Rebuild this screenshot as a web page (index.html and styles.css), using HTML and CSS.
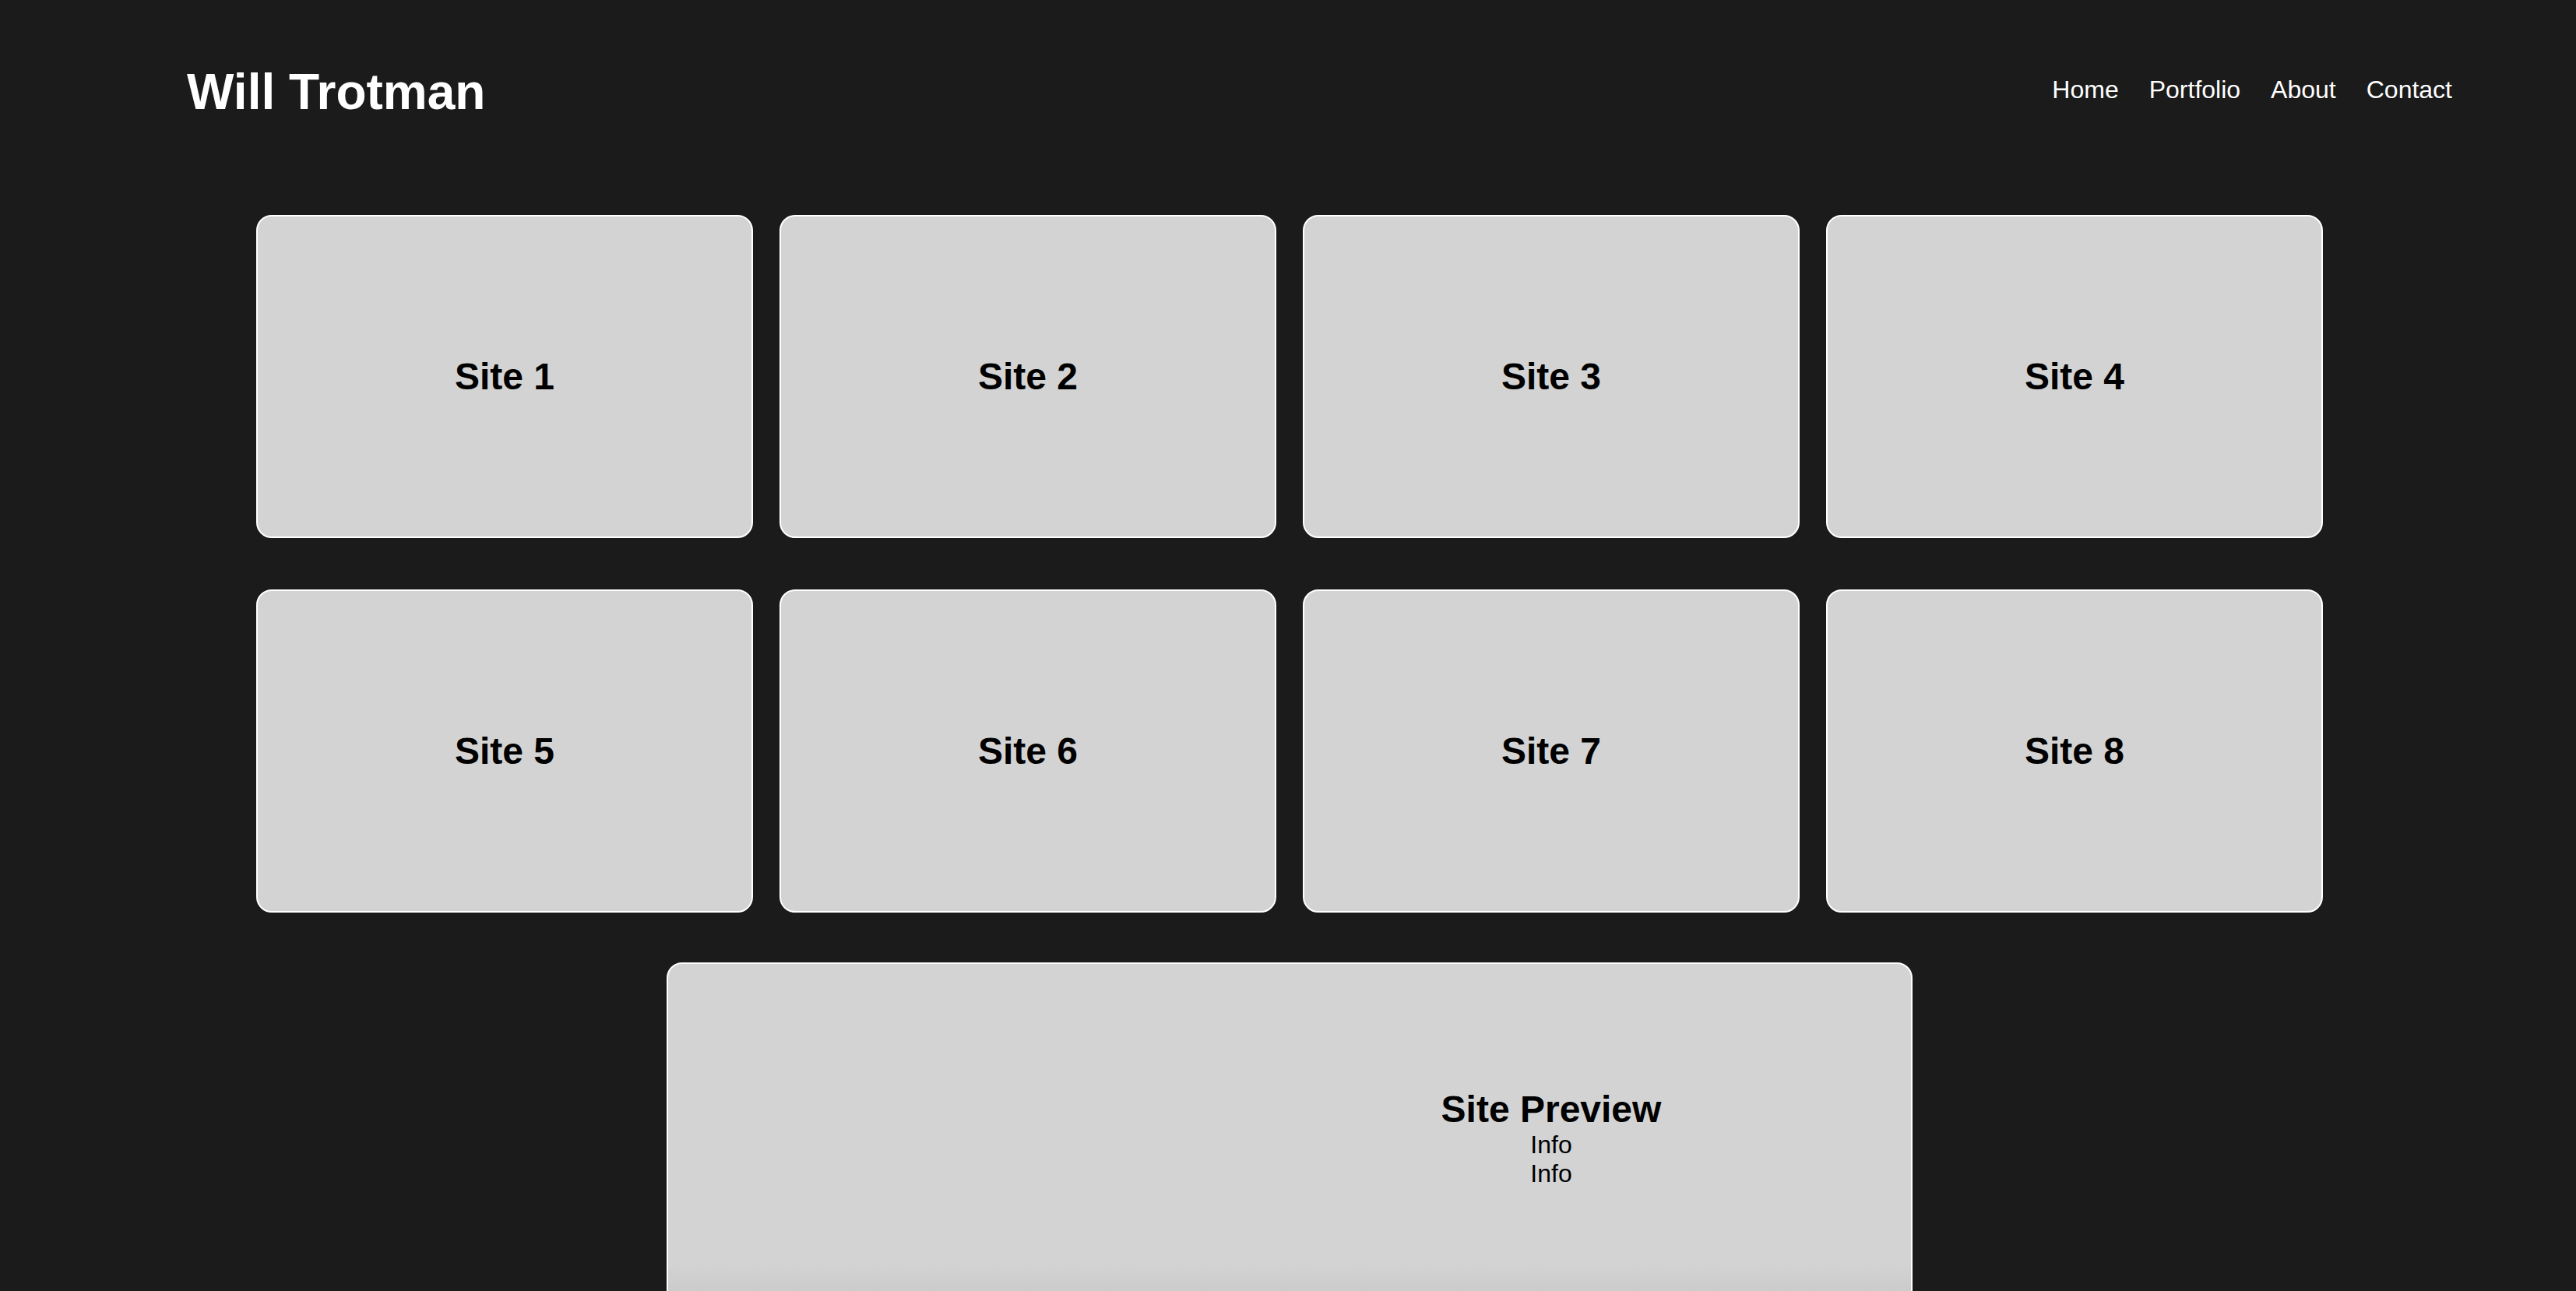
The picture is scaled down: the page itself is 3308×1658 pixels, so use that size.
FILE: index.html
```html
<!DOCTYPE html>
<html lang="en">
<head>
<meta charset="utf-8">
<title>Will Trotman</title>
<link rel="stylesheet" href="styles.css">
</head>
<body>
<header class="header">
  <h1 class="logo">Will Trotman</h1>
  <nav class="nav">
    <a href="#">Home</a>
    <a href="#">Portfolio</a>
    <a href="#">About</a>
    <a href="#">Contact</a>
  </nav>
</header>
<main class="main">
  <section class="grid">
    <div class="card"><h2>Site 1</h2></div>
    <div class="card"><h2>Site 2</h2></div>
    <div class="card"><h2>Site 3</h2></div>
    <div class="card"><h2>Site 4</h2></div>
    <div class="card"><h2>Site 5</h2></div>
    <div class="card"><h2>Site 6</h2></div>
    <div class="card"><h2>Site 7</h2></div>
    <div class="card"><h2>Site 8</h2></div>
  </section>
  <section class="preview-wrap">
    <div class="preview">
      <div class="preview-media"></div>
      <div class="preview-info">
        <h2>Site Preview</h2>
        <p>Info</p>
        <p>Info</p>
      </div>
    </div>
  </section>
</main>
</body>
</html>
```
FILE: styles.css
```css
html, body {
  margin: 0;
  padding: 0;
}

body {
  background: #1b1b1b;
  font-family: "Liberation Sans", Arial, Helvetica, sans-serif;
  color: #000;
  overflow: hidden;
}

.header {
  display: flex;
  justify-content: space-between;
  align-items: flex-start;
  padding: 81px 159px 0 240px;
}

.logo {
  margin: 0;
  font-size: 64px;
  font-weight: 700;
  line-height: normal;
  color: #fff;
}

.nav {
  display: flex;
  gap: 39px;
  padding-top: 16px;
}

.nav a {
  color: #fff;
  font-size: 32px;
  line-height: normal;
  text-decoration: none;
}

.main {
  padding-left: 4px;
}

.grid {
  display: grid;
  grid-template-columns: repeat(4, 638px);
  column-gap: 34px;
  row-gap: 66px;
  justify-content: center;
  padding-top: 121px;
}

.card {
  box-sizing: border-box;
  height: 415px;
  border: 2px solid #fff;
  border-radius: 20px;
  background: #d3d3d3;
  display: flex;
  align-items: center;
  justify-content: center;
}

.card h2 {
  margin: 0;
  font-size: 48px;
  font-weight: 700;
  line-height: normal;
}

.preview-wrap {
  display: flex;
  justify-content: center;
  padding-top: 64px;
}

.preview {
  box-sizing: border-box;
  width: 1600px;
  height: 520px;
  border: 2px solid #fff;
  border-radius: 20px;
  background: linear-gradient(to bottom, #d3d3d3 0, #d3d3d3 385px, #cbcbcb 422px, #c2c2c2 520px);
  display: flex;
}

.preview-media {
  flex: 0 0 672px;
}

.preview-info {
  flex: 1;
  text-align: center;
  padding-top: 159px;
}

.preview-info h2 {
  margin: 0;
  font-size: 48px;
  font-weight: 700;
  line-height: normal;
}

.preview-info p {
  margin: 0;
  font-size: 32px;
  line-height: normal;
}
```
